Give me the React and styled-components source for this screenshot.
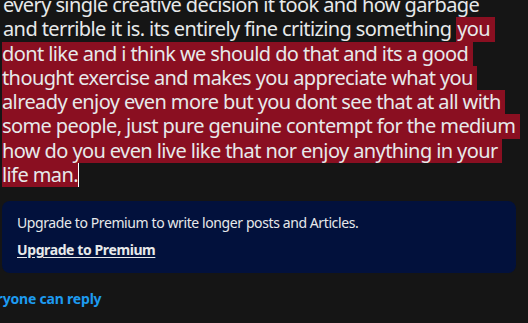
import React from "react";
import styled, { createGlobalStyle } from "styled-components";

const GlobalStyle = createGlobalStyle`
  html, body {
    margin: 0;
    padding: 0;
    background: #151515;
    overflow: hidden;
  }
  body {
    font-family: "Noto Sans", "Open Sans", sans-serif;
  }
`;

const Page = styled.div`
  width: 528px;
  height: 323px;
  display: flex;
  flex-direction: column;
  overflow: hidden;
`;

const Editor = styled.div`
  margin-top: -7px;
  padding-left: 2px;
  display: flex;
  flex-direction: column;
  color: #e7e9ea;
  font-size: 20px;
  letter-spacing: -0.6px;
`;

const Line = styled.div`
  height: 24.3px;
  line-height: 24.3px;
  white-space: pre;
  display: flex;
`;

const Plain = styled.span`
  padding-left: 1px;
`;

const Selected = styled.span`
  background: #8a0f21;
  padding-left: ${(p) => (p.$first ? 0 : 1)}px;
`;

const Caret = styled.span`
  width: 1px;
  height: 24px;
  background: #ffffff;
`;

const PremiumBox = styled.div`
  margin: 14px 12px 0 2px;
  height: 72px;
  box-sizing: border-box;
  padding: 12px 15px;
  background: #02113c;
  border-radius: 8px;
  color: #e7e9ea;
  font-size: 14px;
  letter-spacing: -0.4px;
  display: flex;
  flex-direction: column;
  gap: 7px;
`;

const PremiumText = styled.div`
  line-height: 20px;
`;

const PremiumLink = styled.a`
  font-weight: 700;
  color: #e7e9ea;
  text-decoration: underline;
  text-underline-offset: 2px;
  line-height: 20px;
`;

const ReplyNote = styled.div`
  margin: 16px 0 0 -27px;
  color: #1d9bf0;
  font-weight: 700;
  font-size: 14px;
  letter-spacing: -0.2px;
  line-height: 20px;
`;

const lines = [
  { plain: "every single creative decision it took and how garbage" },
  { plain: "and terrible it is. its entirely fine critizing something ", sel: "you " },
  { sel: "dont like and i think we should do that and its a good " },
  { sel: "thought exercise and makes you appreciate what you " },
  { sel: "already enjoy even more but you dont see that at all with " },
  { sel: "some people, just pure genuine contempt for the medium " },
  { sel: "how do you even live like that nor enjoy anything in your " },
  { sel: "life man.", caret: true },
];

export default function App() {
  return (
    <Page>
      <GlobalStyle />
      <Editor>
        {lines.map((l, i) => (
          <Line key={i}>
            {l.plain && <Plain>{l.plain}</Plain>}
            {l.sel && <Selected $first={!l.plain}>{l.sel}</Selected>}
            {l.caret && <Caret />}
          </Line>
        ))}
      </Editor>
      <PremiumBox>
        <PremiumText>Upgrade to Premium to write longer posts and Articles.</PremiumText>
        <div>
          <PremiumLink>Upgrade to Premium</PremiumLink>
        </div>
      </PremiumBox>
      <ReplyNote>Everyone can reply</ReplyNote>
    </Page>
  );
}
